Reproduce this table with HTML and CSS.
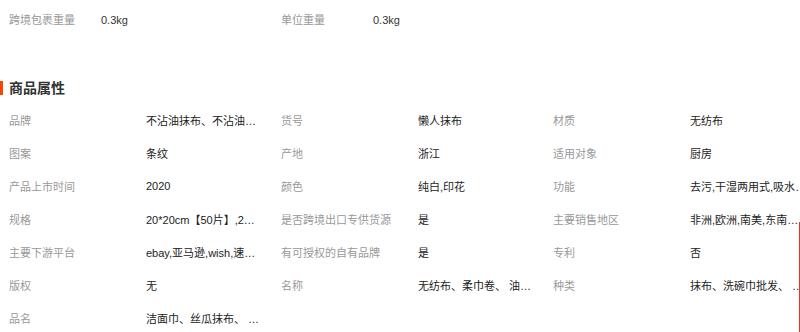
FILE: index.html
```html
<!DOCTYPE html>
<html lang="zh-CN">
<head>
<meta charset="utf-8">
<title>商品属性</title>
<link rel="stylesheet" href="styles.css">
</head>
<body>
<div class="page">
  <div class="weights">
    <span class="w-label">跨境包裹重量</span><span class="w-value">0.3kg</span>
    <span class="w-label">单位重量</span><span class="w-value">0.3kg</span>
  </div>
  <h2 class="title">商品属性</h2>
  <div class="attrs">
    <span class="lab">品牌</span><span class="val">不沾油抹布、不沾油抹布</span>
    <span class="lab">货号</span><span class="val">懒人抹布</span>
    <span class="lab">材质</span><span class="val wide">无纺布</span>

    <span class="lab">图案</span><span class="val">条纹</span>
    <span class="lab">产地</span><span class="val">浙江</span>
    <span class="lab">适用对象</span><span class="val wide">厨房</span>

    <span class="lab">产品上市时间</span><span class="val">2020</span>
    <span class="lab">颜色</span><span class="val">纯白,印花</span>
    <span class="lab">功能</span><span class="val wide">去污,干湿两用式,吸水,去油</span>

    <span class="lab">规格</span><span class="val">20*20cm【50片】,20*40cm</span>
    <span class="lab">是否跨境出口专供货源</span><span class="val">是</span>
    <span class="lab">主要销售地区</span><span class="val wide">非洲,欧洲,南美,东南亚,北美</span>

    <span class="lab">主要下游平台</span><span class="val">ebay,亚马逊,wish,速卖通</span>
    <span class="lab">有可授权的自有品牌</span><span class="val">是</span>
    <span class="lab">专利</span><span class="val wide">否</span>

    <span class="lab">版权</span><span class="val">无</span>
    <span class="lab">名称</span><span class="val">无纺布、柔巾卷、 油污抹布</span>
    <span class="lab">种类</span><span class="val wide">抹布、洗碗巾批发、 厨房抹布</span>

    <span class="lab">品名</span><span class="val">洁面巾、丝瓜抹布、 懒人抹布</span>
  </div>
  <div class="edge"></div>
</div>
</body>
</html>
```

FILE: styles.css
```css
html, body {
  margin: 0;
  padding: 0;
  background: #fff;
}
.page {
  position: relative;
  width: 800px;
  height: 332px;
  overflow: hidden;
  font-family: "Liberation Sans", "Noto Sans CJK SC", sans-serif;
  font-size: 11px;
  color: #333;
}
.weights {
  display: grid;
  grid-template-columns: 92px 180px 92px 180px;
  padding: 10px 0 0 9px;
  line-height: 20px;
}
.w-label { color: #999; }
.w-value { color: #333; }
.title {
  position: relative;
  margin: 48px 0 0;
  padding-left: 9px;
  font-size: 14px;
  font-weight: bold;
  line-height: 20px;
  color: #333;
}
.title::before {
  content: "";
  position: absolute;
  left: 0;
  top: 3px;
  width: 3px;
  height: 14px;
  background: #ff4400;
}
.attrs {
  display: grid;
  grid-template-columns: 137px 135px 137px 135px 137px 135px;
  grid-auto-rows: 33px;
  align-items: center;
  padding: 5px 0 0 9px;
}
.lab {
  color: #999;
  white-space: nowrap;
}
.val {
  color: #222;
  max-width: 114px;
  white-space: nowrap;
  overflow: hidden;
  text-overflow: ellipsis;
}
.val.wide {
  max-width: 118px;
}
.edge {
  position: absolute;
  right: 0;
  top: 222px;
  bottom: 0;
  width: 1px;
  background: #e8312a;
}
```
